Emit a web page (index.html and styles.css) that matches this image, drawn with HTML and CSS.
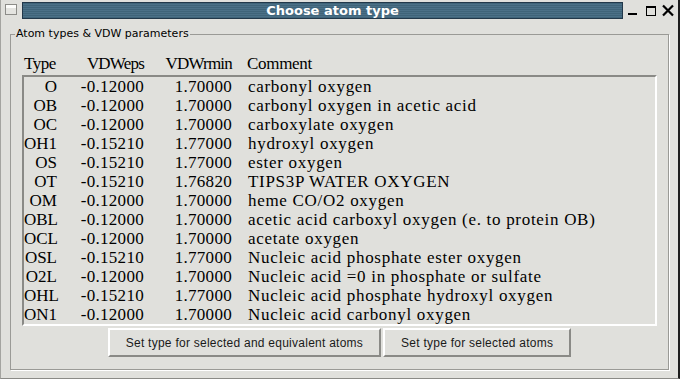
FILE: index.html
```html
<!DOCTYPE html>
<html lang="en">
<head>
  <meta charset="UTF-8" />
  <title>Choose atom type</title>
  <link rel="stylesheet" href="styles.css">
</head>
<body>

  <div class="window">
    <div class="titlebar">
      <div class="menu-btn"></div>
      <div class="title">Choose atom type</div>
      <div class="controls">
        <svg class="ctl-min" width="9" height="16" viewBox="0 0 9 16">
          <rect x="0" y="11" width="9" height="2" fill="#000" />
        </svg>
        <svg class="ctl-max" width="10" height="16" viewBox="0 0 10 16">
          <rect x="0.5" y="4.5" width="9" height="9" fill="none" stroke="#000" stroke-width="1" />
          <rect x="0" y="4" width="10" height="2" fill="#000" />
        </svg>
        <svg class="ctl-close" width="12" height="16" viewBox="0 0 12 16">
          <path d="M1 3.5 L11 13.5 M11 3.5 L1 13.5" stroke="#000" stroke-width="2.2" />
        </svg>
      </div>
    </div>

    <fieldset class="group">
      <legend>Atom types &amp; VDW parameters</legend>
      <div class="group-body">

        <div class="row head">
          <span>Type</span>
          <span>VDWeps</span>
          <span>VDWrmin</span>
          <span class="comment">Comment</span>
        </div>

        <div class="list">
          <div class="row"><span>O</span><span>-0.12000</span><span>1.70000</span><span class="comment">carbonyl oxygen</span></div>
          <div class="row"><span>OB</span><span>-0.12000</span><span>1.70000</span><span class="comment">carbonyl oxygen in acetic acid</span></div>
          <div class="row"><span>OC</span><span>-0.12000</span><span>1.70000</span><span class="comment">carboxylate oxygen</span></div>
          <div class="row"><span>OH1</span><span>-0.15210</span><span>1.77000</span><span class="comment">hydroxyl oxygen</span></div>
          <div class="row"><span>OS</span><span>-0.15210</span><span>1.77000</span><span class="comment">ester oxygen</span></div>
          <div class="row"><span>OT</span><span>-0.15210</span><span>1.76820</span><span class="comment">TIPS3P WATER OXYGEN</span></div>
          <div class="row"><span>OM</span><span>-0.12000</span><span>1.70000</span><span class="comment">heme CO/O2 oxygen</span></div>
          <div class="row"><span>OBL</span><span>-0.12000</span><span>1.70000</span><span class="comment">acetic acid carboxyl oxygen (e. to protein OB)</span></div>
          <div class="row"><span>OCL</span><span>-0.12000</span><span>1.70000</span><span class="comment">acetate oxygen</span></div>
          <div class="row"><span>OSL</span><span>-0.15210</span><span>1.77000</span><span class="comment">Nucleic acid phosphate ester oxygen</span></div>
          <div class="row"><span>O2L</span><span>-0.12000</span><span>1.70000</span><span class="comment">Nucleic acid =0 in phosphate or sulfate</span></div>
          <div class="row"><span>OHL</span><span>-0.15210</span><span>1.77000</span><span class="comment">Nucleic acid phosphate hydroxyl oxygen</span></div>
          <div class="row"><span>ON1</span><span>-0.12000</span><span>1.70000</span><span class="comment">Nucleic acid carbonyl oxygen</span></div>
        </div>

        <div class="actions">
          <button class="btn">Set type for selected and equivalent atoms</button>
          <button class="btn">Set type for selected atoms</button>
        </div>

      </div>
    </fieldset>
  </div>

</body>
</html>
```

FILE: styles.css
```css
body {
  margin: 0;
  background: #e0e0dc;
  font-family: 'DejaVu Sans', sans-serif;
  overflow: hidden;
}

.window {
  width: 680px;
  height: 379px;
  box-sizing: border-box;
  border-left: 1px solid #a4a4a0;
  border-right: 2px solid #1c1c1c;
  border-bottom: 1px solid #8a8a86;
  display: flex;
  flex-direction: column;
}

/* ---------- title bar ---------- */
.titlebar {
  display: flex;
  align-items: flex-start;
  height: 22px;
  box-sizing: border-box;
  padding: 2px 0 0 4px;
}

.menu-btn {
  width: 12px;
  height: 11px;
  margin-top: 2px;
  box-sizing: border-box;
  border: 1px solid #8c8c88;
  background: linear-gradient(#fcfcfa 0 3px, #e4e4e0 3px);
}

.title {
  flex: 1;
  margin-left: 5px;
  height: 17px;
  box-sizing: border-box;
  padding-left: 20px;
  border: 1px solid #22384a;
  background: repeating-linear-gradient(
    to bottom,
    #3f6479 0,
    #3f6479 1px,
    #4b7087 1px,
    #4b7087 2px
  );
  color: white;
  font-weight: bold;
  font-size: 13px;
  line-height: 15px;
  text-align: center;
}

.controls {
  display: flex;
  width: 55px;
}

.ctl-min {
  margin-left: 5px;
}

.ctl-max {
  margin-left: 9px;
}

.ctl-close {
  margin-left: 6px;
}

/* ---------- group box ---------- */
.group {
  margin: 5px 9px 0 9px;
  padding: 0;
  min-width: 0;
  border: 1px solid #9a9a96;
  box-shadow: 1px 1px 0 #fff;
}

.group legend {
  margin-left: 4px;
  padding: 0 1px;
  font-size: 11px;
  line-height: 14px;
  color: #000;
}

.group-body {
  padding: 13px 11px 12px;
}

/* ---------- table ---------- */
.row {
  display: grid;
  grid-template-columns: 33px 87px 88px 1fr;
  height: 19px;
  line-height: 19px;
  font-family: 'Liberation Serif', serif;
  font-size: 17px;
  letter-spacing: 0.3px;
  color: #000;
  white-space: nowrap;
}

.row span {
  text-align: right;
}

.row span:first-child {
  letter-spacing: 0;
}

.row .comment {
  text-align: left;
  padding-left: 16px;
  letter-spacing: 0.7px;
}

.head {
  padding-left: 2px;
  letter-spacing: -0.8px;
}

.head span:first-child {
  text-align: left;
  letter-spacing: -0.5px;
}

.head .comment {
  padding-left: 15px;
  letter-spacing: -0.3px;
}

.list {
  margin-top: 2px;
  border: 2px solid;
  border-color: #8a8a86 #fff #fff #8a8a86;
}

/* ---------- buttons ---------- */
.actions {
  display: flex;
  justify-content: center;
  gap: 2px;
  margin-top: 2px;
}

.btn {
  height: 29px;
  padding: 0 16px;
  background: #e0e0dc;
  border: 2px solid;
  border-color: #fff #8a8a86 #8a8a86 #fff;
  font-family: 'Liberation Sans', sans-serif;
  font-size: 12px;
  letter-spacing: 0.25px;
  color: #1a1a1a;
}
```
